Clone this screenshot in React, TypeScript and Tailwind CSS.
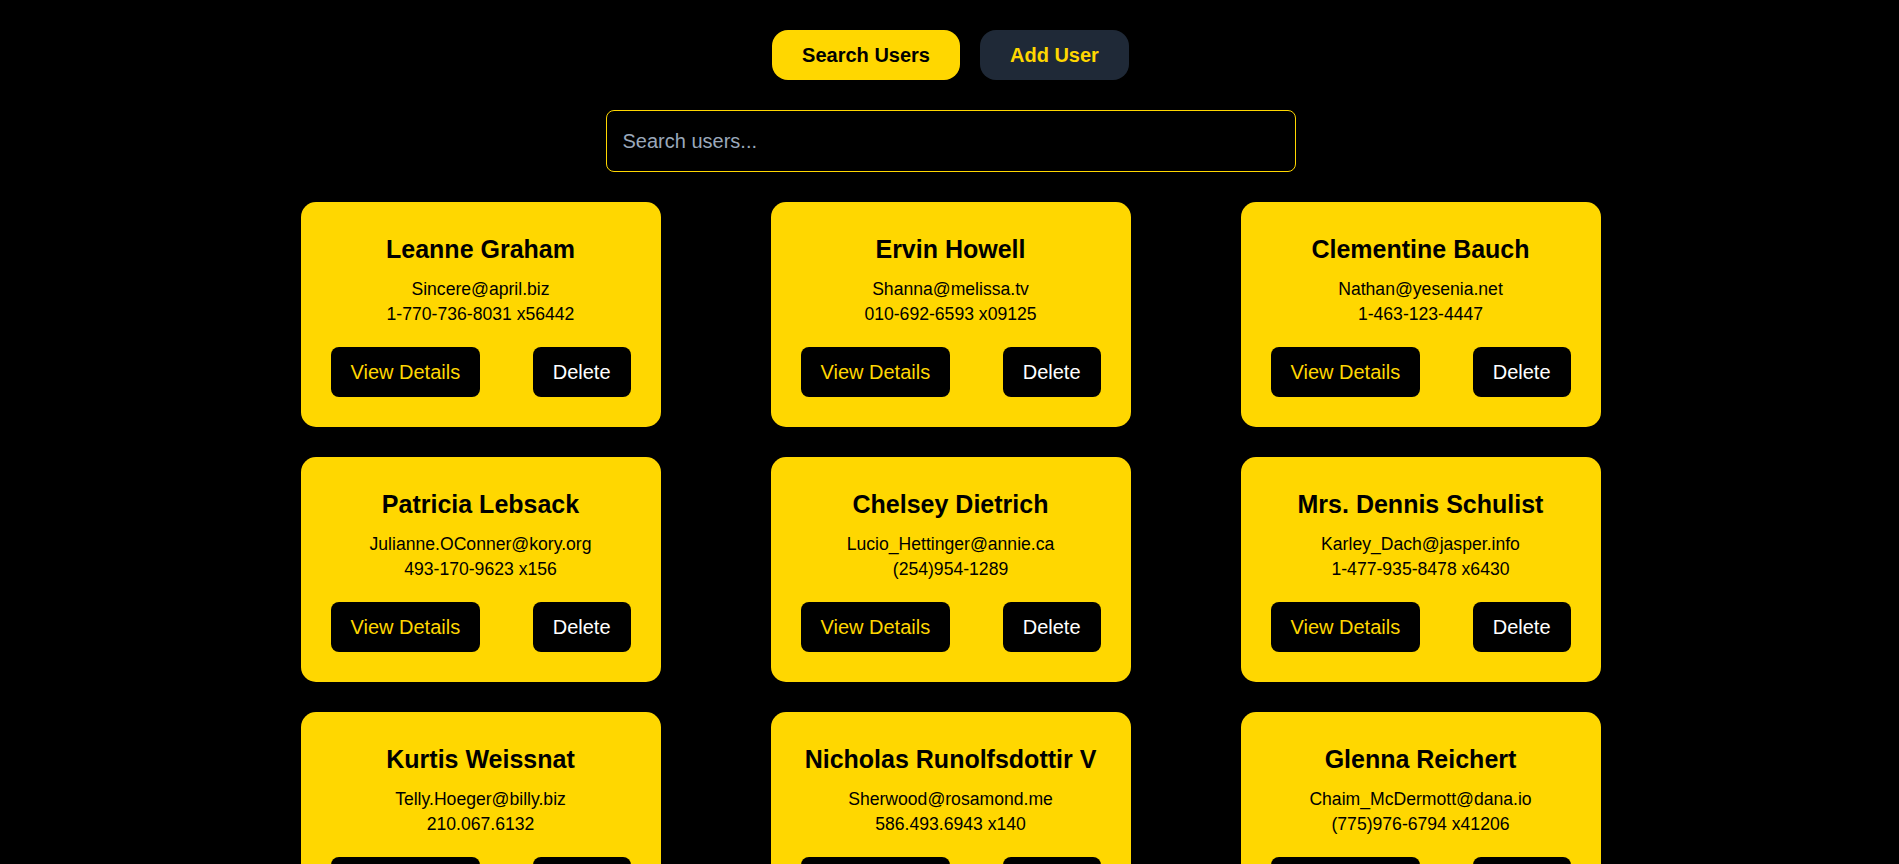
import { useState } from 'react';

type User = { id: number; name: string; email: string; phone: string };

const users: User[] = [
  { id: 1, name: 'Leanne Graham', email: 'Sincere@april.biz', phone: '1-770-736-8031 x56442' },
  { id: 2, name: 'Ervin Howell', email: 'Shanna@melissa.tv', phone: '010-692-6593 x09125' },
  { id: 3, name: 'Clementine Bauch', email: 'Nathan@yesenia.net', phone: '1-463-123-4447' },
  { id: 4, name: 'Patricia Lebsack', email: 'Julianne.OConner@kory.org', phone: '493-170-9623 x156' },
  { id: 5, name: 'Chelsey Dietrich', email: 'Lucio_Hettinger@annie.ca', phone: '(254)954-1289' },
  { id: 6, name: 'Mrs. Dennis Schulist', email: 'Karley_Dach@jasper.info', phone: '1-477-935-8478 x6430' },
  { id: 7, name: 'Kurtis Weissnat', email: 'Telly.Hoeger@billy.biz', phone: '210.067.6132' },
  { id: 8, name: 'Nicholas Runolfsdottir V', email: 'Sherwood@rosamond.me', phone: '586.493.6943 x140' },
  { id: 9, name: 'Glenna Reichert', email: 'Chaim_McDermott@dana.io', phone: '(775)976-6794 x41206' },
  { id: 10, name: 'Clementina DuBuque', email: 'Rey.Padberg@karina.biz', phone: '024-648-3804' },
];

function UserCard({ user, onDelete }: { user: User; onDelete: () => void }) {
  return (
    <div className="w-[360px] rounded-[15px] bg-[#ffd700] p-[30px] text-center text-black">
      <h2 className="text-[25px] font-bold leading-[35px]">{user.name}</h2>
      <p className="mt-[10px] text-[17.6px] leading-[24.5px]">{user.email}</p>
      <p className="text-[17.6px] leading-[24.5px]">{user.phone}</p>
      <div className="mt-[21px] flex items-center justify-between">
        <button className="h-[50px] rounded-[8px] bg-black px-5 text-[20px] text-[#ffd700]">View Details</button>
        <button onClick={onDelete} className="h-[50px] rounded-[8px] bg-black px-5 text-[20px] text-white">Delete</button>
      </div>
    </div>
  );
}

export default function App() {
  const [query, setQuery] = useState('');
  const [list, setList] = useState(users);

  const filtered = list.filter((u) => u.name.toLowerCase().includes(query.toLowerCase()));

  return (
    <div className="min-h-screen bg-black pt-[30px] pb-[30px] pl-[2px] font-['Liberation_Sans',Arial,sans-serif]">
      {/* Tabs */}
      <div className="flex justify-center gap-5">
        <button className="h-[50px] rounded-[16px] bg-[#ffd700] px-[30px] text-[20px] font-bold text-black">Search Users</button>
        <button className="h-[50px] rounded-[16px] bg-[#1f2937] px-[30px] text-[20px] font-bold text-[#ffd700]">Add User</button>
      </div>

      {/* Search */}
      <div className="mt-[30px] flex justify-center">
        <input
          value={query}
          onChange={(e) => setQuery(e.target.value)}
          placeholder="Search users..."
          className="h-[62px] w-[690px] rounded-[8px] border border-[#ffd700] bg-black px-[16px] text-[20px] text-white outline-none placeholder:text-[#9aa8bb]"
        />
      </div>

      {/* Cards */}
      <div className="mt-[30px] grid grid-cols-[repeat(3,360px)] justify-center gap-x-[110px] gap-y-[30px]">
        {filtered.map((u) => (
          <UserCard key={u.id} user={u} onDelete={() => setList(list.filter((x) => x.id !== u.id))} />
        ))}
      </div>
    </div>
  );
}
